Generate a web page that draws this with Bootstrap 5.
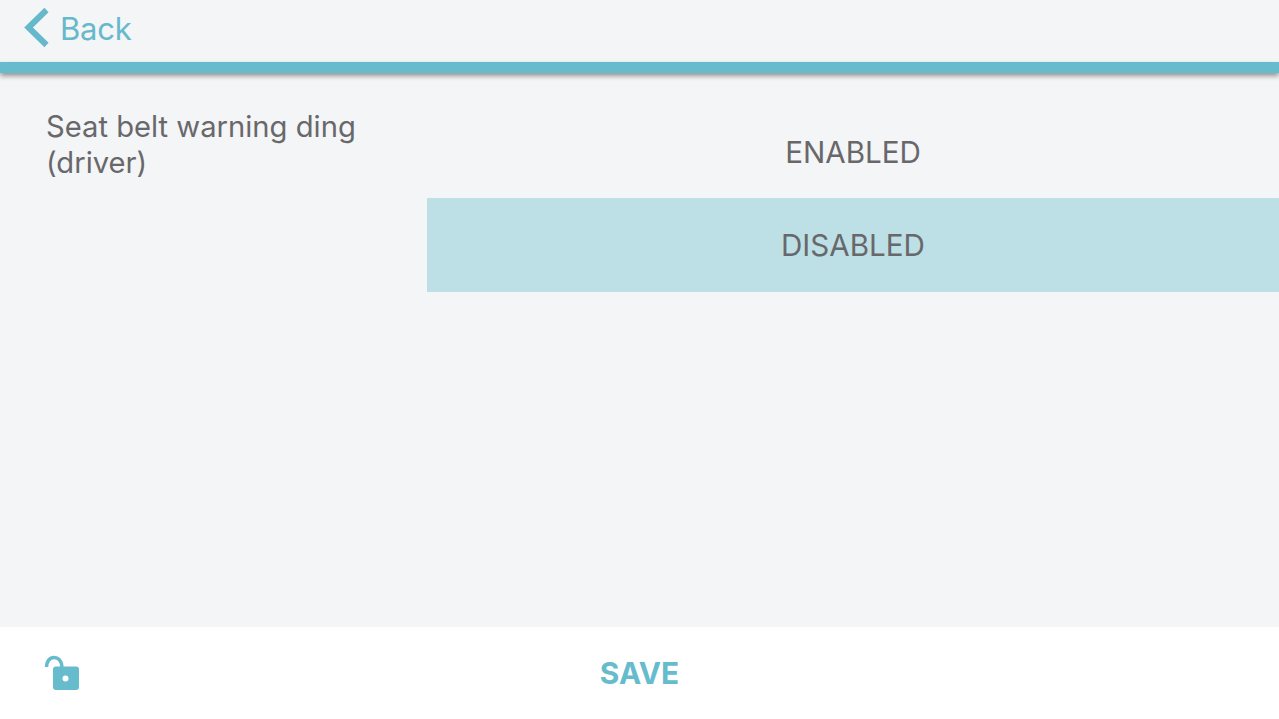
<!DOCTYPE html>
<html lang="en">
<head>
    <meta charset="UTF-8">
    <title>Seat belt warning ding</title>
    <link href="https://cdn.jsdelivr.net/npm/bootstrap@5.3.0/dist/css/bootstrap.min.css" rel="stylesheet">
    <style>
        html, body { height: 100%; }
        body {
            background: #f4f5f7;
            font-family: "Inter", "Liberation Sans", sans-serif;
            color: #68686b;
            overflow: hidden;
        }
        .top-bar { height: 61.500px; padding: 0 0 5px 23px; }
        .back-link { color: #66b9cb; font-size: 31px; line-height: 1; text-decoration: none; letter-spacing: -0.2px; }
        .back-link svg { display: block; }
        .accent-rule { height: 11px; background: #66bbcd; box-shadow: 0 3px 5px rgba(70, 70, 70, .55); }
        .setting-label { width: 427px; padding: 36px 20px 0 46px; font-size: 29.200px; line-height: 36px; }
        .option-item { height: 94px; font-size: 29.600px; }
        .option-item.first-option { padding-top: 2px; }
        .option-item.picked { background: #bde0e6; }
        .options-col { padding-top: 31.500px; }
        .bottom-bar { height: 92px; background: #fff; padding: 0 0 0 44px; }
        .lock-slot { width: 36px; }
        .save-text { color: #66bbcd; font-size: 29.800px; font-weight: 700; left: 50%; transform: translateX(-50%); }
    </style>
</head>
<body class="d-flex flex-column">
    <header class="top-bar d-flex align-items-center">
        <a class="back-link d-flex align-items-center gap-2" href="#">
            <svg width="29" height="42" viewBox="0 0 29 42"><path d="M23.500 3 5.500 20.500 23.500 38" fill="none" stroke="#66b9cb" stroke-width="6"/></svg>
            <span>Back</span>
        </a>
    </header>
    <div class="accent-rule"></div>

    <main class="d-flex flex-grow-1">
        <div class="setting-label">Seat belt warning ding (driver)</div>
        <div class="options-col flex-grow-1">
            <div class="option-item first-option d-flex align-items-center justify-content-center">ENABLED</div>
            <div class="option-item picked d-flex align-items-center justify-content-center">DISABLED</div>
        </div>
    </main>

    <footer class="bottom-bar d-flex align-items-center position-relative">
        <div class="lock-slot">
            <svg width="36" height="36" viewBox="0 0 36 36" class="d-block">
                <path d="M2.500 12C2.500 6 6 2.500 10 2.500s7.500 3 8 9.500" fill="none" stroke="#66bbcd" stroke-width="3.600"/>
                <rect x="9" y="11.500" width="26" height="23.500" rx="3" fill="#66bbcd"/>
                <circle cx="21.500" cy="23.500" r="3" fill="#fff"/>
            </svg>
        </div>
        <span class="save-text position-absolute">SAVE</span>
    </footer>

    <script src="https://cdn.jsdelivr.net/npm/bootstrap@5.3.0/dist/js/bootstrap.bundle.min.js"></script>
</body>
</html>
